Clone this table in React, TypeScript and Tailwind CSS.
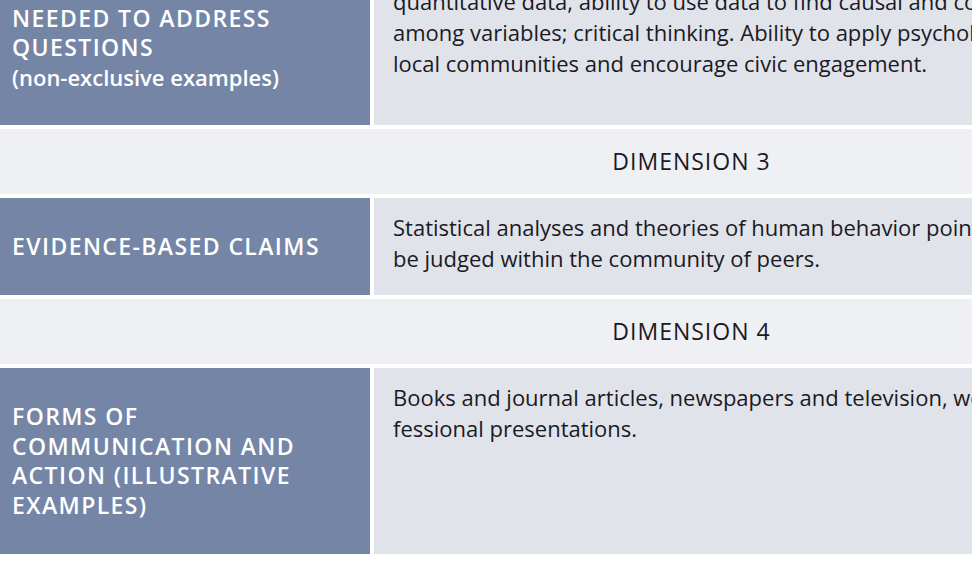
import React from 'react';

const font = { fontFamily: '"Open Sans", "Noto Sans", sans-serif' };

interface RowProps {
  label: React.ReactNode;
  lines: string[];
  height: string;
}

const Row: React.FC<RowProps> = ({ label, lines, height }) => {
  return (
    <div className={`flex gap-1 ${height}`}>
      {/* Label cell */}
      <div className="w-[370px] shrink-0 bg-[#7585a6] flex items-center px-3">
        <div className="text-white text-[23px] leading-[29.5px] font-semibold tracking-[1.4px]">{label}</div>
      </div>
      {/* Content cell */}
      <div className="flex-1 bg-[#e1e3ea] pl-[19px] pt-[14px]">
        <p className="text-[#1a1a24] text-[22px] leading-[31px] whitespace-nowrap">
          {lines.map((l, i) => (
            <React.Fragment key={i}>
              {l}
              {i < lines.length - 1 && <br />}
            </React.Fragment>
          ))}
        </p>
      </div>
    </div>
  );
};

const DimensionBand: React.FC<{ n: number }> = ({ n }) => {
  return (
    <div className="flex gap-1 h-[65px] bg-[#eff0f4]">
      <div className="w-[370px] shrink-0" />
      <div className="flex-1 flex items-center justify-center">
        <span className="text-[#1a1a24] text-[23px] font-medium tracking-[1px]">DIMENSION {n}</span>
      </div>
    </div>
  );
};

export default function App() {
  return (
    <div className="w-[972px] h-[575px] overflow-hidden bg-white" style={font}>
      <div className="w-[1009px] flex flex-col gap-1 -mt-[59px]">
        <Row
          height="h-[184px]"
          label={
            <>
              KEY CONCEPTS AND SKILLS
              <br />
              NEEDED TO ADDRESS
              <br />
              QUESTIONS
              <br />
              <span className="tracking-normal text-[22px]">(non-exclusive examples)</span>
            </>
          }
          lines={[
            'Methods of research design, ability to collect and analyze qualitative and',
            'quantitative data, ability to use data to find causal and correlational relationships',
            'among variables; critical thinking. Ability to apply psychological knowledge to',
            'local communities and encourage civic engagement.',
          ]}
        />
        <DimensionBand n={3} />
        <Row
          height="h-[97px]"
          label="EVIDENCE-BASED CLAIMS"
          lines={[
            'Statistical analyses and theories of human behavior point to claims that can',
            'be judged within the community of peers.',
          ]}
        />
        <DimensionBand n={4} />
        <Row
          height="h-[186px]"
          label={
            <>
              FORMS OF
              <br />
              COMMUNICATION AND
              <br />
              ACTION (ILLUSTRATIVE
              <br />
              EXAMPLES)
            </>
          }
          lines={[
            'Books and journal articles, newspapers and television, websites, and pro-',
            'fessional presentations.',
          ]}
        />
      </div>
    </div>
  );
}
